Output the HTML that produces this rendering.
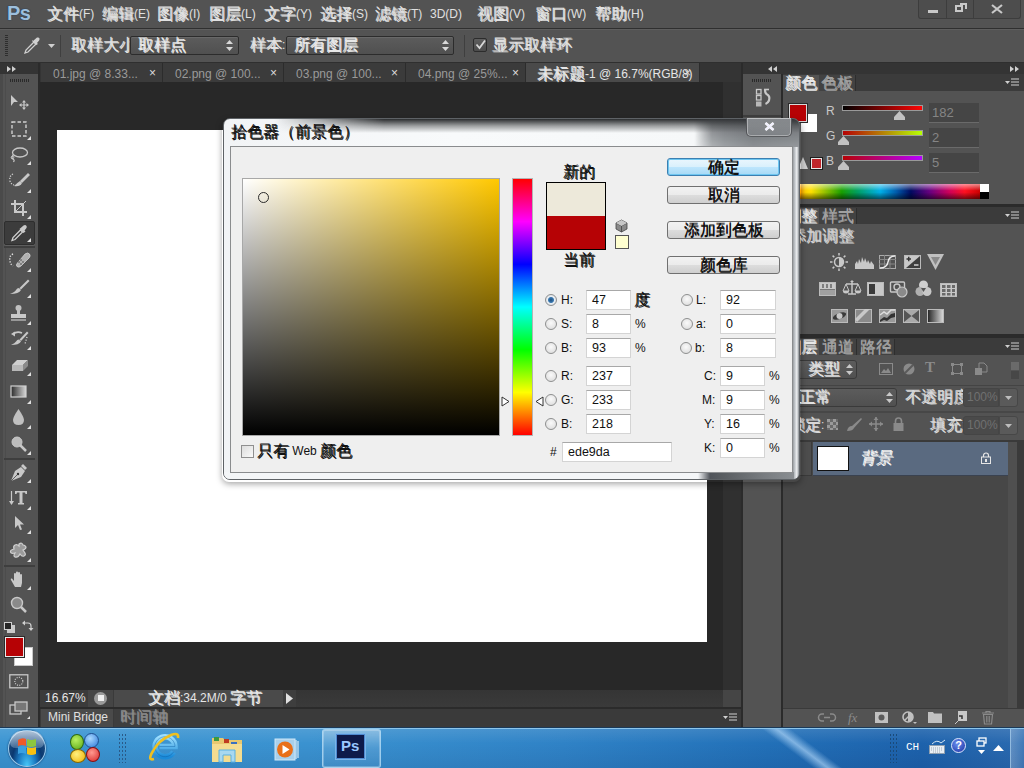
<!DOCTYPE html>
<html><head><meta charset="utf-8">
<style>
*{margin:0;padding:0;box-sizing:border-box}
html,body{width:1024px;height:768px;overflow:hidden;background:#282828;font-family:"Liberation Sans",sans-serif;font-size:12px;color:#ddd}
div,span{position:absolute}
.t{white-space:nowrap}
svg{position:absolute;overflow:visible}
i.c{font-style:normal;font-size:1.3333em;line-height:1px;vertical-align:-1px;text-shadow:0.7px 0.5px 0 currentColor}
.mi{top:6px;font-size:12px;line-height:16px;color:#e0e0e0;white-space:nowrap}
.tab{top:63px;height:19px;background:#3b3b3b;border-right:1px solid #2c2c2c;color:#9a9a9a;font-size:12px;line-height:19px;white-space:nowrap}
.tab span{top:2px;left:12px}
.tab b{position:absolute;top:1px;font-weight:normal;color:#dcdcdc;font-size:12px;line-height:18px}
.ptab{height:16px;font-size:12px;line-height:16px;text-align:center;white-space:nowrap}
.pmenu{width:14px;height:9px}
.vbox{background:#454545;border-bottom:1px solid #6a6a6a;color:#858585;font-size:13px;line-height:19px;padding-left:3px}
.btn{left:667px;width:113px;height:18px;border:1px solid #707070;border-radius:3px;background:linear-gradient(#f2f2f2,#ebebeb 50%,#dddddd 50%,#cfcfcf);color:#111;font-size:12px;line-height:16px;text-align:center}
.inp{background:#fff;border:1px solid #d4d4d4;border-top-color:#a8a8a8;color:#111;font-size:12.5px;line-height:19px;padding-left:5px}
.rad{width:12px;height:12px;border-radius:50%;border:1px solid #8e8f8f;background:radial-gradient(circle at 50% 40%,#fafafa,#d8d8d8)}
.lbl{color:#111;font-size:12px;line-height:14px;white-space:nowrap}
</style></head><body>
<!-- menubar -->
<div style="left:0;top:0;width:1024px;height:28px;background:#535353"></div>
<div class="t" style="left:7px;top:2px;font-size:20px;font-weight:bold;color:#9dbfdc;line-height:22px;letter-spacing:-0.5px;text-shadow:0 0 1px #1e3a5a,0 0 1px #1e3a5a">Ps</div>
<div class="mi" style="left:47px"><i class="c">文件</i>(F)</div>
<div class="mi" style="left:102px"><i class="c">编辑</i>(E)</div>
<div class="mi" style="left:157px"><i class="c">图像</i>(I)</div>
<div class="mi" style="left:209px"><i class="c">图层</i>(L)</div>
<div class="mi" style="left:264px"><i class="c">文字</i>(Y)</div>
<div class="mi" style="left:320px"><i class="c">选择</i>(S)</div>
<div class="mi" style="left:375px"><i class="c">滤镜</i>(T)</div>
<div class="mi" style="left:430px">3D(D)</div>
<div class="mi" style="left:477px"><i class="c">视图</i>(V)</div>
<div class="mi" style="left:535px"><i class="c">窗口</i>(W)</div>
<div class="mi" style="left:595px"><i class="c">帮助</i>(H)</div>
<!-- window buttons -->
<div style="left:918px;top:0;width:103px;height:19px;background:#4d4d4d;border:1px solid #3d3d3d;border-top:none;border-radius:0 0 3px 3px"></div>
<div style="left:946px;top:0;width:1px;height:18px;background:#3d3d3d"></div>
<div style="left:973px;top:0;width:1px;height:18px;background:#3d3d3d"></div>
<div style="left:928px;top:10px;width:10px;height:3px;background:#c8c8c8"></div>
<div style="left:955px;top:5px;width:8px;height:7px;border:2px solid #c8c8c8"></div>
<div style="left:960px;top:3px;width:7px;height:6px;border:2px solid #c8c8c8;border-left:none;border-bottom:none"></div>
<svg style="left:991px;top:4px" width="12" height="10"><path d="M1 1L11 9M11 1L1 9" stroke="#c8c8c8" stroke-width="2.2"/></svg>
<!-- options bar -->
<div style="left:0;top:28px;width:1024px;height:1px;background:#2f2f2f"></div>
<div style="left:0;top:29px;width:1024px;height:33px;background:#535353;border-top:1px solid #5e5e5e"></div>
<div style="left:0;top:62px;width:1024px;height:1px;background:#2f2f2f"></div>
<div style="left:5px;top:35px;width:3px;height:22px;background:repeating-linear-gradient(#2e2e2e 0 1px,transparent 1px 2px)"></div>
<svg style="left:23px;top:36px" width="18" height="19"><path d="M2 17L3 14L11 6L13 8L5 16Z" fill="none" stroke="#d0d0d0" stroke-width="1.3"/><path d="M10 5L14 1.5Q16 1 16.5 2.5Q17 4 14 7L15 8L13 9L9 5L10 4Z" fill="#d0d0d0"/></svg>
<svg style="left:48px;top:44px" width="7" height="4"><path d="M0 0H7L3.5 4Z" fill="#cfcfcf"/></svg>
<div style="left:60px;top:35px;width:1px;height:22px;background:#3f3f3f"></div>
<div class="t" style="left:71px;top:38px;color:#e0e0e0;font-size:12px;line-height:14px"><i class="c">取样大小</i>:</div>
<div style="left:130px;top:36px;width:109px;height:19px;background:linear-gradient(#5c5c5c,#505050);border:1px solid #2c2c2c;border-radius:2px;box-shadow:inset 0 1px 0 #686868"></div>
<div class="t" style="left:138px;top:38px;color:#e8e8e8;font-size:12px;line-height:14px"><i class="c">取样点</i></div>
<svg style="left:226px;top:40px" width="7" height="11"><path d="M0 4L3.5 0L7 4ZM0 7L3.5 11L7 7Z" fill="#d8d8d8"/></svg>
<div class="t" style="left:250px;top:38px;color:#e0e0e0;font-size:12px;line-height:14px"><i class="c">样本</i>:</div>
<div style="left:286px;top:36px;width:168px;height:19px;background:linear-gradient(#5c5c5c,#505050);border:1px solid #2c2c2c;border-radius:2px;box-shadow:inset 0 1px 0 #686868"></div>
<div class="t" style="left:294px;top:38px;color:#e8e8e8;font-size:12px;line-height:14px"><i class="c">所有图层</i></div>
<svg style="left:442px;top:40px" width="7" height="11"><path d="M0 4L3.5 0L7 4ZM0 7L3.5 11L7 7Z" fill="#d8d8d8"/></svg>
<div style="left:464px;top:35px;width:1px;height:22px;background:#3f3f3f"></div>
<div style="left:473px;top:38px;width:14px;height:14px;background:linear-gradient(#5e5e5e,#4c4c4c);border:1px solid #2c2c2c;border-radius:2px"></div>
<svg style="left:475px;top:39px" width="11" height="11"><path d="M1.5 5.5L4.5 9L10 1.5" fill="none" stroke="#d8d8d8" stroke-width="1.8"/></svg>
<div class="t" style="left:492px;top:38px;color:#e0e0e0;font-size:12px;line-height:14px"><i class="c">显示取样环</i></div>
<!-- tool panel -->
<div style="left:0;top:63px;width:39px;height:11px;background:#343434"></div>
<svg style="left:7px;top:66px" width="12" height="6"><path d="M0 0L4 3L0 6ZM5 0L9 3L5 6Z" fill="#cfcfcf"/></svg>
<div style="left:0;top:74px;width:39px;height:653px;background:#535353"></div>
<div style="left:0;top:74px;width:3px;height:653px;background:#4a4a4a"></div>
<div style="left:38px;top:63px;width:2px;height:664px;background:#2b2b2b"></div>
<div style="left:10px;top:79px;width:20px;height:3px;background:repeating-linear-gradient(90deg,#2a2a2a 0 1px,transparent 1px 2px)"></div>
<!-- document area -->
<div style="left:40px;top:63px;width:701px;height:19px;background:#343434"></div>
<div style="left:40px;top:82px;width:683px;height:608px;background:#282828"></div>
<div style="left:723px;top:82px;width:18px;height:608px;background:#303030"></div>
<div style="left:57px;top:130px;width:650px;height:512px;background:#ffffff"></div>
<!-- tabs -->
<div class="tab" style="left:41px;width:122px"><span>01.jpg @ 8.33...</span><b style="left:108px">×</b></div>
<div class="tab" style="left:163px;width:121px"><span>02.png @ 100...</span><b style="left:107px">×</b></div>
<div class="tab" style="left:284px;width:122px"><span>03.png @ 100...</span><b style="left:107px">×</b></div>
<div class="tab" style="left:406px;width:120px"><span>04.png @ 25%...</span><b style="left:106px">×</b></div>
<div class="tab" style="left:526px;width:174px;background:#4a4a4a;color:#e6e6e6"><span style="left:11px"><i class="c">未标题</i>-1 @ 16.7%(RGB/8)</span><b style="left:158px">×</b></div>
<!-- status bar -->
<div style="left:40px;top:690px;width:701px;height:17px;background:linear-gradient(#353535,#3a3a3a)"></div>
<div style="left:40px;top:690px;width:48px;height:17px;background:#3b3b3b"></div>
<div class="t" style="left:45px;top:691px;color:#e6e6e6;font-size:12px;line-height:15px">16.67%</div>
<div style="left:88px;top:690px;width:25px;height:17px;background:#454545"></div>
<div style="left:94px;top:692px;width:13px;height:13px;border-radius:50%;background:#9a9a9a"></div>
<div style="left:98px;top:695px;width:6px;height:6px;background:#eee"></div>
<div style="left:113px;top:690px;width:170px;height:17px;background:#4a4a4a;border-left:1px solid #3a3a3a"></div>
<div class="t" style="left:148px;top:691px;color:#e6e6e6;font-size:12px;line-height:15px"><i class="c">文档</i>:34.2M/0 <i class="c">字节</i></div>
<div style="left:283px;top:690px;width:13px;height:17px;background:#3e3e3e"></div>
<svg style="left:286px;top:693px" width="7" height="11"><path d="M0 0L7 5.5L0 11Z" fill="#e0e0e0"/></svg>
<div style="left:723px;top:690px;width:18px;height:17px;background:#454545"></div>
<!-- bottom strip -->
<div style="left:40px;top:707px;width:701px;height:2px;background:#2b2b2b"></div>
<div style="left:40px;top:709px;width:701px;height:18px;background:#3a3a3a"></div>
<div style="left:41px;top:709px;width:72px;height:18px;background:#4a4a4a;color:#e0e0e0;font-size:12px;line-height:17px;padding-left:7px" class="t">Mini Bridge</div>
<div style="left:114px;top:709px;width:46px;height:18px;background:#3e3e3e;color:#8a8a8a;font-size:12px;line-height:17px;padding-left:6px;border-right:1px solid #2f2f2f" class="t"><i class="c">时间轴</i></div>
<svg style="left:723px;top:713px" width="14" height="9"><path d="M0 3H5L2.5 6Z" fill="#d0d0d0"/><path d="M6 1H14M6 4H14M6 7H14" stroke="#d0d0d0" stroke-width="1"/></svg>
<!-- tool icons -->
<div style="left:5px;top:74px;width:1px;height:653px;background:#4c4c4c"></div>
<svg style="left:10px;top:94px" width="20" height="16"><path d="M1 1L8 8H4L1 12Z" fill="#c8c8c8"/><path d="M14 7V15M10 11H18" stroke="#c8c8c8" stroke-width="1.2"/><path d="M14 6L12 8.5H16ZM14 16L12 13.5H16ZM9 11L11.5 9V13ZM19 11L16.5 9V13Z" fill="#c8c8c8"/></svg>
<svg style="left:11px;top:121px" width="21" height="19"><path d="M1 1H15V15H1Z" fill="none" stroke="#d0d0d0" stroke-width="1.4" stroke-dasharray="3.5 2"/><path d="M20 15V19H16Z" fill="#e0e0e0"/></svg>
<svg style="left:10px;top:146px" width="22" height="20"><ellipse cx="10" cy="6.5" rx="7.5" ry="4.5" fill="none" stroke="#c8c8c8" stroke-width="1.3"/><path d="M3 9Q1 12 3 13Q5 14 3.5 16" fill="none" stroke="#c8c8c8" stroke-width="1.2"/><circle cx="2.5" cy="11.5" r="1.3" fill="none" stroke="#c8c8c8"/><path d="M21 15V19H17Z" fill="#e0e0e0"/></svg>
<svg style="left:8px;top:172px" width="24" height="21"><path d="M5 2Q1 4 2 9Q3 12 6 13" fill="none" stroke="#d0d0d0" stroke-width="1.3" stroke-dasharray="1.2 1.4"/><path d="M20 1L22 3L14 11L12 9Z" fill="#c8c8c8"/><path d="M12 9L14 11Q12 15 6 14Q9 11 12 9Z" fill="#c8c8c8"/><path d="M23 17V21H19Z" fill="#e0e0e0"/></svg>
<svg style="left:8px;top:198px" width="24" height="21"><path d="M7 2V14H19M3 6H15V18" fill="none" stroke="#c8c8c8" stroke-width="2"/><path d="M7 14L18 3" stroke="#c8c8c8" stroke-width="1"/><path d="M23 17V21H19Z" fill="#e0e0e0"/></svg>
<!-- eyedropper active -->
<div style="left:4px;top:221px;width:31px;height:24px;background:#3c3c3c;border:1px solid #2e2e2e;border-radius:2px;box-shadow:0 1px 0 #5e5e5e"></div>
<svg style="left:10px;top:224px" width="22" height="19"><path d="M2 16.5L3 13.5L10.5 6L12.5 8L5 15.5Z" fill="none" stroke="#d0d0d0" stroke-width="1.3"/><path d="M9.5 5L13.5 1.5Q15.5 0.5 16.5 2Q17.5 3.5 14.5 6.5L15.5 7.5L13.5 9L8.5 4Z" fill="#c8c8c8"/><path d="M21 14V18H17Z" fill="#e0e0e0"/></svg>
<div style="left:4px;top:246px;width:31px;height:2px;background:#3e3e3e"></div>
<svg style="left:8px;top:252px" width="24" height="21"><path d="M5 2Q1 4 2 8Q2 12 5 14" fill="none" stroke="#e0e0e0" stroke-width="1.4" stroke-dasharray="1.2 1.6"/><path d="M17 2Q20 0 21.5 2Q23 4 21 6L13 14Q11 16 9 14.5Q7.5 13 9.5 11Z" fill="#b0b0b0" stroke="#d0d0d0" stroke-width="0.8"/><circle cx="13" cy="8" r="0.8" fill="#444"/><circle cx="15" cy="10" r="0.8" fill="#444"/><circle cx="11" cy="10" r="0.8" fill="#444"/><circle cx="13" cy="12" r="0.8" fill="#444"/><path d="M23 16V20H19Z" fill="#e0e0e0"/></svg>
<svg style="left:8px;top:278px" width="24" height="21"><path d="M20 1.5L21.5 3L13 11.5L11.5 10Z" fill="#c8c8c8"/><path d="M11 10L13 12Q11 16 2 16Q7 14 8 12Q9 10 11 10Z" fill="#c8c8c8"/><path d="M23 16V20H19Z" fill="#e0e0e0"/></svg>
<svg style="left:8px;top:304px" width="24" height="21"><circle cx="10.5" cy="4" r="3" fill="#c0c0c0"/><path d="M9 5H12V10H9Z" fill="#c0c0c0"/><path d="M3 10H18V14H3Z" fill="#c8c8c8"/><path d="M3 16H18" stroke="#c8c8c8" stroke-width="1.2"/><path d="M23 17V21H19Z" fill="#e0e0e0"/></svg>
<svg style="left:8px;top:330px" width="24" height="21"><path d="M5 4Q9 1 14 3" fill="none" stroke="#c8c8c8" stroke-width="1.8"/><path d="M3 4L7 1.5V6.5Z" fill="#c8c8c8"/><path d="M19 1.5L20.5 3L13 11L11.5 9.5Z" fill="#c8c8c8"/><path d="M11 9.5L13 11.5Q11 15 3 15Q7 13 8 11.5Q9 9.5 11 9.5Z" fill="#c8c8c8"/><path d="M19 7L17 14" stroke="#e0e0e0" stroke-width="1.3" stroke-dasharray="1 1.8"/><path d="M23 16V20H19Z" fill="#e0e0e0"/></svg>
<svg style="left:8px;top:356px" width="24" height="21"><path d="M4 9L9 4H20L15 9Z" fill="#d0d0d0"/><path d="M4 9H15V15H4Z" fill="#b8b8b8"/><path d="M15 9L20 4V10L15 15Z" fill="#8a8a8a"/><path d="M23 16V20H19Z" fill="#e0e0e0"/></svg>
<svg style="left:8px;top:385px" width="24" height="21"><defs><linearGradient id="tg" x1="0" x2="1"><stop offset="0" stop-color="#2a2a2a"/><stop offset="1" stop-color="#d8d8d8"/></linearGradient></defs><rect x="3" y="1" width="15" height="11" fill="url(#tg)" stroke="#d0d0d0" stroke-width="1.2"/><path d="M23 15V19H19Z" fill="#e0e0e0"/></svg>
<svg style="left:8px;top:409px" width="24" height="21"><path d="M10.5 0Q5 8 5 11Q5 16 10.5 16Q16 16 16 11Q16 8 10.5 0Z" fill="#c0c0c0"/><path d="M23 16V20H19Z" fill="#e0e0e0"/></svg>
<svg style="left:8px;top:436px" width="24" height="21"><circle cx="9" cy="6" r="5" fill="#bcbcbc" stroke="#c8c8c8"/><path d="M12 9L18 15" stroke="#c8c8c8" stroke-width="2.5"/><path d="M23 15V19H19Z" fill="#e0e0e0"/></svg>
<div style="left:4px;top:458px;width:31px;height:2px;background:#3e3e3e"></div>
<svg style="left:8px;top:463px" width="24" height="21"><path d="M15 1L19 5L17 7L13 3Z" fill="#c8c8c8"/><path d="M13 4L17 8L13 14L3 18L7 8Z" fill="#c8c8c8"/><circle cx="10" cy="11" r="1.2" fill="#333"/><path d="M3 18L9.5 11.5" stroke="#444" stroke-width="0.8"/><path d="M23 16V20H19Z" fill="#e0e0e0"/></svg>
<svg style="left:8px;top:490px" width="24" height="21"><path d="M3.5 1V14" stroke="#c8c8c8" stroke-width="1.2"/><path d="M1 11L3.5 15L6 11Z" fill="#c8c8c8"/><path d="M7 1H19V4H17.5L17 2.5H14.5V13H16V14.5H10V13H11.5V2.5H9L8.5 4H7Z" fill="#c8c8c8"/><path d="M23 16V20H19Z" fill="#e0e0e0"/></svg>
<svg style="left:8px;top:515px" width="24" height="21"><path d="M7 1L16 9.5H12L14 14.5L12 15L10 10L7 13Z" fill="#c8c8c8"/><path d="M23 15V19H19Z" fill="#e0e0e0"/></svg>
<svg style="left:8px;top:542px" width="24" height="21"><path d="M11 2Q14 0 15 3Q17 3 18 5Q18 7 15 8L17 11Q18 13 16 14Q14 15 12 12Q10 16 7 15Q5 14 7 11Q3 12 2.5 10Q2 8 6 7Q5 4 7 3Q9 2 11 4Z" fill="#9a9a9a" stroke="#d0d0d0" stroke-width="1.2"/><path d="M23 16V20H19Z" fill="#e0e0e0"/></svg>
<div style="left:4px;top:565px;width:31px;height:2px;background:#3e3e3e"></div>
<svg style="left:8px;top:571px" width="24" height="21"><path d="M7 16L3 9Q2 7 4 7.5L6 10V3Q6 2 7 2Q8 2 8 3V8V1.5Q8 0.5 9 0.5Q10 0.5 10 1.5V8V2Q10 1 11 1Q12 1 12 2V8V4Q12 3 13 3Q14 3 14 4V12L13 16Z" fill="#c8c8c8"/><path d="M23 15V19H19Z" fill="#e0e0e0"/></svg>
<svg style="left:8px;top:596px" width="24" height="21"><circle cx="9" cy="7" r="5.5" fill="#8a8a8a" stroke="#c8c8c8" stroke-width="1.4"/><path d="M13 11L18 16" stroke="#c8c8c8" stroke-width="2.5"/></svg>
<!-- default/swap colors -->
<div style="left:7px;top:625px;width:8px;height:8px;background:#c8c8c8"></div>
<div style="left:4px;top:622px;width:8px;height:8px;background:#262626;border:1px solid #d0d0d0"></div>
<svg style="left:22px;top:620px" width="11" height="11"><path d="M3 3H6Q9 3 9 6V8" fill="none" stroke="#d0d0d0" stroke-width="1.2"/><path d="M0 3L3 0.5V5.5ZM9 11L6.5 8H11.5Z" fill="#d0d0d0"/></svg>
<!-- fg/bg -->
<div style="left:14px;top:647px;width:19px;height:19px;background:#fff;border:1px solid #c8c8c8"></div>
<div style="left:5px;top:637px;width:19px;height:20px;background:#b60205;border:1px solid #e8e8e8;box-shadow:0 0 0 1px #2a2a2a"></div>
<!-- quick mask -->
<svg style="left:9px;top:674px" width="20" height="15"><rect x="0.8" y="0.8" width="18" height="13" fill="none" stroke="#c8c8c8" stroke-width="1.3"/><circle cx="9.8" cy="7.3" r="4" fill="none" stroke="#c8c8c8" stroke-width="1.2" stroke-dasharray="1.1 1.2"/></svg>
<svg style="left:9px;top:701px" width="22" height="19"><rect x="1" y="4" width="11" height="9" fill="none" stroke="#c8c8c8" stroke-width="1.3"/><rect x="6" y="1" width="12" height="9" fill="#777" stroke="#c8c8c8" stroke-width="1.3"/><path d="M21 15V18H18Z" fill="#e0e0e0"/></svg>
<!-- right dock -->
<div style="left:741px;top:63px;width:2px;height:664px;background:#2b2b2b"></div>
<div style="left:743px;top:63px;width:281px;height:11px;background:#343434"></div>
<svg style="left:768px;top:66px" width="10" height="6"><path d="M4 0L0 3L4 6ZM9 0L5 3L9 6Z" fill="#cfcfcf"/></svg>
<svg style="left:1010px;top:66px" width="10" height="6"><path d="M0 0L4 3L0 6ZM5 0L9 3L5 6Z" fill="#cfcfcf"/></svg>
<div style="left:743px;top:74px;width:38px;height:653px;background:#535353"></div>
<div style="left:743px;top:115px;width:38px;height:2px;background:#3e3e3e"></div>
<div style="left:752px;top:79px;width:20px;height:3px;background:repeating-linear-gradient(90deg,#2a2a2a 0 1px,transparent 1px 2px)"></div>
<svg style="left:755px;top:88px" width="18" height="20"><rect x="1.5" y="1.5" width="4.5" height="4.5" fill="none" stroke="#c8c8c8" stroke-width="1.3"/><rect x="1.5" y="7.5" width="4.5" height="4.5" fill="none" stroke="#c8c8c8" stroke-width="1.3"/><rect x="1" y="13.5" width="5.5" height="5" fill="#b8b8b8"/><path d="M9 1.5H14" stroke="#c8c8c8" stroke-width="1.6"/><path d="M10 1.5Q10 5 11.5 6Q15.5 8 14 12.5Q13 15 10.5 16" fill="none" stroke="#c8c8c8" stroke-width="2.2"/></svg>
<div style="left:781px;top:74px;width:2px;height:653px;background:#2b2b2b"></div>

<!-- color panel -->
<div style="left:783px;top:74px;width:241px;height:17px;background:#3b3b3b"></div>
<div class="ptab" style="left:783px;top:75px;width:36px;background:#535353;color:#e8e8e8"><i class="c">颜色</i></div>
<div class="ptab" style="left:819px;top:75px;width:37px;background:#424242;border-right:1px solid #2e2e2e;color:#a0a0a0"><i class="c">色板</i></div>
<svg style="left:1005px;top:78px" width="15" height="9"><path d="M0 3H5L2.5 6Z" fill="#d0d0d0"/><path d="M6 1H14M6 4H14M6 7H14" stroke="#d0d0d0" stroke-width="1"/></svg>
<div style="left:783px;top:91px;width:241px;height:113px;background:#535353"></div>
<!-- fg/bg swatches -->
<div style="left:801px;top:114px;width:16px;height:18px;background:#fff"></div>
<div style="left:788px;top:103px;width:20px;height:20px;background:#b60205;border:1px solid #2a2a2a;box-shadow:inset 0 0 0 1px #d8d8d8"></div>
<div style="left:810px;top:157px;width:13px;height:13px;background:#c0262b;border:1px solid #1e1e1e;box-shadow:inset 0 0 0 1px #e8e8e8"></div>
<svg style="left:798px;top:156px" width="10" height="14"><path d="M0 13L5 1L10 13Z" fill="#cfcfcf"/></svg>
<!-- sliders -->
<div class="t" style="left:826px;top:104px;color:#c8c8c8;font-size:12px;line-height:14px">R</div>
<div class="t" style="left:826px;top:129px;color:#c8c8c8;font-size:12px;line-height:14px">G</div>
<div class="t" style="left:826px;top:154px;color:#c8c8c8;font-size:12px;line-height:14px">B</div>
<div style="left:842px;top:105px;width:81px;height:6px;border:1px solid #9a9a9a;background:linear-gradient(90deg,#000,#ff0505)"></div>
<div style="left:842px;top:130px;width:81px;height:6px;border:1px solid #9a9a9a;background:linear-gradient(90deg,#b60205,#b6ff05)"></div>
<div style="left:842px;top:155px;width:81px;height:6px;border:1px solid #9a9a9a;background:linear-gradient(90deg,#b60205,#b602ff)"></div>
<svg style="left:894px;top:111px" width="11" height="9"><path d="M0 9V6L5.5 0L11 6V9Z" fill="#c2c2c2"/></svg>
<svg style="left:838px;top:136px" width="11" height="9"><path d="M0 9V6L5.5 0L11 6V9Z" fill="#c2c2c2"/></svg>
<svg style="left:838px;top:161px" width="11" height="9"><path d="M0 9V6L5.5 0L11 6V9Z" fill="#c2c2c2"/></svg>
<div class="vbox" style="left:929px;top:103px;width:50px;height:20px">182</div>
<div class="vbox" style="left:929px;top:128px;width:50px;height:20px">2</div>
<div class="vbox" style="left:929px;top:153px;width:50px;height:20px">5</div>
<!-- spectrum -->
<div style="left:788px;top:184px;width:192px;height:15px;background:linear-gradient(90deg,#ff2a00 0%,#ffd200 9%,#ffe000 12%,#18a000 28%,#00a060 36%,#00b0e8 48%,#0060b0 56%,#000a60 64%,#6a0080 74%,#d0005a 84%,#ff1020 92%,#cc0000 100%);"></div>
<div style="left:788px;top:184px;width:192px;height:15px;background:linear-gradient(#ffffff 0%,rgba(255,255,255,0) 45%,rgba(0,0,0,0) 55%,#000 100%);opacity:.55"></div>
<div style="left:980px;top:184px;width:9px;height:8px;background:#fff"></div>
<div style="left:980px;top:192px;width:9px;height:7px;background:#000"></div>

<!-- gap -->
<div style="left:783px;top:204px;width:241px;height:3px;background:#2b2b2b"></div>
<!-- adjustments panel -->
<div style="left:783px;top:207px;width:241px;height:17px;background:#3b3b3b"></div>
<div class="ptab" style="left:783px;top:208px;width:36px;background:#535353;color:#e8e8e8"><i class="c">调整</i></div>
<div class="ptab" style="left:819px;top:208px;width:38px;background:#424242;border-right:1px solid #2e2e2e;color:#a0a0a0"><i class="c">样式</i></div>
<svg style="left:1005px;top:211px" width="15" height="9"><path d="M0 3H5L2.5 6Z" fill="#d0d0d0"/><path d="M6 1H14M6 4H14M6 7H14" stroke="#d0d0d0" stroke-width="1"/></svg>
<div style="left:783px;top:224px;width:241px;height:110px;background:#535353"></div>
<div class="t" style="left:790px;top:229px;color:#d0d0d0;font-size:12px;line-height:15px"><i class="c">添加调整</i></div>
<!-- adjustment icons row1 -->
<svg style="left:830px;top:253px" width="18" height="18"><circle cx="9" cy="9" r="4.5" fill="none" stroke="#c8c8c8" stroke-width="1.5"/><path d="M9 4.5A4.5 4.5 0 0 1 9 13.5Z" fill="#c8c8c8"/><path d="M9 0V2.5M9 15.5V18M0 9H2.5M15.5 9H18M2.6 2.6L4.3 4.3M13.7 13.7L15.4 15.4M2.6 15.4L4.3 13.7M13.7 4.3L15.4 2.6" stroke="#c8c8c8" stroke-width="1.5"/></svg>
<svg style="left:855px;top:255px" width="19" height="14"><path d="M0 14V9L2 6L3 9L4 4L6 8L7 2L9 7L10 3L12 8L13 5L15 9L16 6L19 10V14Z" fill="#c8c8c8"/></svg>
<svg style="left:879px;top:255px" width="17" height="14"><rect x="0.5" y="0.5" width="16" height="13" fill="none" stroke="#aaa"/><path d="M5.5 0V14M11 0V14M0 4.5H17M0 9H17" stroke="#888" stroke-width="1"/><path d="M1 13Q8 13 9 7Q10 1 16 1" fill="none" stroke="#eee" stroke-width="1.5"/></svg>
<svg style="left:904px;top:255px" width="17" height="14"><rect x="0.5" y="0.5" width="16" height="13" fill="#c8c8c8" stroke="#bbb"/><path d="M16 1V13H2Z" fill="#3e3e3e"/><path d="M2.5 4H7M4.75 1.8V6.2" stroke="#333" stroke-width="1.4"/><path d="M10 10H14.5" stroke="#ddd" stroke-width="1.4"/></svg>
<svg style="left:927px;top:254px" width="17" height="16"><path d="M0 0H17L8.5 16Z" fill="#c0c0c0"/><path d="M4 3H13L8.5 11Z" fill="#8a8a8a"/></svg>
<!-- row2 -->
<svg style="left:819px;top:282px" width="17" height="14"><rect x="0.5" y="0.5" width="16" height="13" fill="#777" stroke="#bbb"/><path d="M1 1H16V7H1Z" fill="#c8c8c8"/><path d="M4 2V6M8 2V6M12 2V6" stroke="#666" stroke-width="1.5"/><path d="M1 8H16V13H1Z" fill="#a0a0a0"/></svg>
<svg style="left:843px;top:280px" width="18" height="17"><path d="M9 1V14M3 4H15M5 14H13" stroke="#c8c8c8" stroke-width="1.5"/><path d="M7 2L9 0L11 2Z" fill="#c8c8c8"/><path d="M3 4L0 11H6Z M15 4L12 11H18Z" fill="none" stroke="#c8c8c8" stroke-width="1"/><path d="M0 11A3 2.5 0 0 0 6 11Z M12 11A3 2.5 0 0 0 18 11Z" fill="#c8c8c8"/></svg>
<svg style="left:867px;top:282px" width="17" height="14"><rect x="0.5" y="0.5" width="16" height="13" fill="#c8c8c8" stroke="#bbb"/><path d="M2 2H8V12H2Z" fill="#3a3a3a"/></svg>
<svg style="left:890px;top:279px" width="19" height="19"><rect x="0.5" y="3" width="14" height="10" rx="1" fill="none" stroke="#c8c8c8" stroke-width="1.4"/><circle cx="7" cy="8" r="3" fill="none" stroke="#c8c8c8" stroke-width="1.4"/><circle cx="12" cy="13" r="5" fill="#8a8a8a" stroke="#c8c8c8" stroke-width="1.2"/></svg>
<svg style="left:915px;top:280px" width="17" height="17"><circle cx="8.5" cy="5" r="4.5" fill="#d0d0d0"/><circle cx="5" cy="11.5" r="4.5" fill="#b0b0b0"/><circle cx="12" cy="11.5" r="4.5" fill="#c8c8c8"/><path d="M6 8H11L8.5 12Z" fill="#555"/></svg>
<svg style="left:940px;top:283px" width="17" height="14"><rect x="0.5" y="0.5" width="16" height="13" fill="#c8c8c8" stroke="#bbb"/><path d="M2 2H5.5V5H2ZM7 2H10.5V5H7ZM12 2H15V5H12ZM2 6H5.5V9H2ZM7 6H10.5V9H7ZM12 6H15V9H12ZM2 10H5.5V12.5H2ZM7 10H10.5V12.5H7ZM12 10H15V12.5H12Z" fill="#6a6a6a"/></svg>
<!-- row3 -->
<svg style="left:831px;top:309px" width="17" height="14"><rect x="0.5" y="0.5" width="16" height="13" fill="#9a9a9a" stroke="#bbb"/><ellipse cx="8.5" cy="7" rx="7" ry="3" transform="rotate(-20 8.5 7)" fill="#3a3a3a"/><circle cx="8.5" cy="7" r="3" fill="#c8c8c8"/></svg>
<svg style="left:855px;top:309px" width="17" height="14"><rect x="0.5" y="0.5" width="16" height="13" fill="#8a8a8a" stroke="#bbb"/><path d="M0 10L10 0H15L2 13Z" fill="#c8c8c8"/></svg>
<svg style="left:879px;top:309px" width="17" height="14"><rect x="0.5" y="0.5" width="16" height="13" fill="#9a9a9a" stroke="#bbb"/><path d="M1 11L5 8L8 9L12 5L16 4V8L12 9L8 12L5 11L1 13Z" fill="#333"/><path d="M1 6L5 3L8 5L12 1L16 1" stroke="#ddd" stroke-width="1.5" fill="none"/></svg>
<svg style="left:903px;top:309px" width="17" height="14"><rect x="0.5" y="0.5" width="16" height="13" fill="#aaa" stroke="#bbb"/><path d="M1 1L8.5 7L1 13ZM16 1L8.5 7L16 13Z" fill="#555"/></svg>
<svg style="left:927px;top:309px" width="17" height="14"><defs><linearGradient id="gm" x1="0" x2="1"><stop offset="0" stop-color="#222"/><stop offset="1" stop-color="#ddd"/></linearGradient></defs><rect x="0.5" y="0.5" width="16" height="13" fill="url(#gm)" stroke="#bbb"/></svg>

<!-- gap -->
<div style="left:783px;top:334px;width:241px;height:4px;background:#2b2b2b"></div>
<!-- layers panel -->
<div style="left:783px;top:338px;width:241px;height:17px;background:#3b3b3b"></div>
<div class="ptab" style="left:783px;top:339px;width:36px;background:#535353;color:#e8e8e8"><i class="c">图层</i></div>
<div class="ptab" style="left:819px;top:339px;width:38px;background:#424242;border-right:1px solid #2e2e2e;color:#a0a0a0"><i class="c">通道</i></div>
<div class="ptab" style="left:857px;top:339px;width:38px;background:#424242;border-right:1px solid #2e2e2e;color:#a0a0a0"><i class="c">路径</i></div>
<svg style="left:1005px;top:342px" width="15" height="9"><path d="M0 3H5L2.5 6Z" fill="#d0d0d0"/><path d="M6 1H14M6 4H14M6 7H14" stroke="#d0d0d0" stroke-width="1"/></svg>
<div style="left:783px;top:355px;width:241px;height:87px;background:#535353"></div>
<!-- filter row -->
<div style="left:778px;top:360px;width:79px;height:19px;background:linear-gradient(#5c5c5c,#505050);border:1px solid #3a3a3a;border-radius:3px"></div>
<div class="t" style="left:808px;top:362px;color:#e0e0e0;font-size:12px;line-height:14px"><i class="c">类型</i></div>
<div style="left:785px;top:364px;width:9px;height:9px;border-radius:50%;border:2px solid #9a9a9a"></div>
<svg style="left:846px;top:364px" width="7" height="11"><path d="M0 4L3.5 0L7 4ZM0 7L3.5 11L7 7Z" fill="#c8c8c8"/></svg>
<svg style="left:879px;top:363px" width="14" height="12"><rect x="0.5" y="0.5" width="13" height="11" fill="none" stroke="#8a8a8a"/><path d="M2 10L5 6L7 8L9 5L12 10Z" fill="#8a8a8a"/></svg>
<svg style="left:903px;top:363px" width="12" height="12"><circle cx="6" cy="6" r="5.5" fill="#8a8a8a"/><path d="M2 10L10 2" stroke="#5a5a5a" stroke-width="2"/></svg>
<div class="t" style="left:925px;top:359px;color:#8a8a8a;font-size:15px;font-family:'Liberation Serif',serif;font-weight:bold;line-height:16px">T</div>
<svg style="left:951px;top:363px" width="12" height="12"><rect x="1.5" y="1.5" width="9" height="9" fill="none" stroke="#8a8a8a"/><rect x="0" y="0" width="3" height="3" fill="#8a8a8a"/><rect x="9" y="0" width="3" height="3" fill="#8a8a8a"/><rect x="0" y="9" width="3" height="3" fill="#8a8a8a"/><rect x="9" y="9" width="3" height="3" fill="#8a8a8a"/></svg>
<svg style="left:975px;top:363px" width="12" height="12"><path d="M4 0H9L12 3V9H4Z" fill="none" stroke="#8a8a8a"/><rect x="0" y="5" width="7" height="7" fill="#8a8a8a"/></svg>
<div style="left:1011px;top:362px;width:8px;height:8px;background:#6a6a6a"></div>
<div style="left:1011px;top:371px;width:8px;height:8px;background:#474747"></div>
<!-- blend row -->
<div style="left:782px;top:386px;width:1px;height:1px;background:#3a3a3a"></div>
<div style="left:783px;top:385px;width:241px;height:1px;background:#444"></div>
<div style="left:778px;top:388px;width:119px;height:19px;background:linear-gradient(#5c5c5c,#505050);border:1px solid #3a3a3a;border-radius:3px"></div>
<div class="t" style="left:799px;top:390px;color:#e0e0e0;font-size:12px;line-height:14px"><i class="c">正常</i></div>
<svg style="left:886px;top:392px" width="7" height="11"><path d="M0 4L3.5 0L7 4ZM0 7L3.5 11L7 7Z" fill="#c8c8c8"/></svg>
<div class="t" style="left:905px;top:390px;color:#d8d8d8;font-size:12px;line-height:14px"><i class="c">不透明度</i>:</div>
<div style="left:963px;top:388px;width:36px;height:19px;background:#4a4a4a;border:1px solid #454545;border-radius:3px 0 0 3px;color:#707070;font-size:12px;line-height:17px;padding-left:3px" class="t">100%</div>
<div style="left:999px;top:388px;width:19px;height:19px;background:#5a5a5a;border:1px solid #474747;border-radius:0 3px 3px 0"></div>
<svg style="left:1005px;top:396px" width="7" height="4"><path d="M0 0H7L3.5 4Z" fill="#bdbdbd"/></svg>
<div style="left:783px;top:411px;width:241px;height:2px;background:#474747"></div>
<div class="t" style="left:789px;top:418px;color:#d8d8d8;font-size:12px;line-height:14px"><i class="c">锁定</i>:</div>
<svg style="left:827px;top:419px" width="11" height="11"><rect x="0" y="0" width="11" height="11" fill="#6a6a6a"/><path d="M0 0H3V3H0ZM6 0H9V3H6ZM3 3H6V6H3ZM9 3H11V6H9ZM0 6H3V9H0ZM6 6H9V9H6ZM3 9H6V11H3ZM9 9H11V11H9Z" fill="#9a9a9a"/></svg>
<svg style="left:846px;top:417px" width="16" height="15"><path d="M1 14Q2 9 6 9L15 1L16 2L8 11Q7 14 1 14Z" fill="#8a8a8a"/></svg>
<svg style="left:869px;top:417px" width="14" height="14"><path d="M7 0V14M0 7H14" stroke="#8a8a8a" stroke-width="1.5"/><path d="M7 0L4.5 3H9.5ZM7 14L4.5 11H9.5ZM0 7L3 4.5V9.5ZM14 7L11 4.5V9.5Z" fill="#8a8a8a"/></svg>
<svg style="left:893px;top:417px" width="11" height="14"><path d="M2.5 6V4A3 3 0 0 1 8.5 4V6" fill="none" stroke="#8a8a8a" stroke-width="1.6"/><rect x="0.5" y="6" width="10" height="8" fill="#8a8a8a"/></svg>
<div class="t" style="left:930px;top:418px;color:#d8d8d8;font-size:12px;line-height:14px"><i class="c">填充</i>:</div>
<div style="left:963px;top:416px;width:36px;height:19px;background:#4a4a4a;border:1px solid #454545;border-radius:3px 0 0 3px;color:#707070;font-size:12px;line-height:17px;padding-left:3px" class="t">100%</div>
<div style="left:999px;top:416px;width:19px;height:19px;background:#5a5a5a;border:1px solid #474747;border-radius:0 3px 3px 0"></div>
<svg style="left:1005px;top:424px" width="7" height="4"><path d="M0 0H7L3.5 4Z" fill="#bdbdbd"/></svg>
<div style="left:783px;top:440px;width:241px;height:2px;background:#3a3a3a"></div>
<!-- layer list -->
<div style="left:783px;top:442px;width:241px;height:266px;background:#474747"></div>
<div style="left:783px;top:442px;width:29px;height:34px;background:#4d4d4d;border-right:1px solid #3a3a3a;border-bottom:1px solid #3a3a3a"></div>
<div style="left:813px;top:442px;width:195px;height:34px;background:#5a6a80;border-bottom:1px solid #3a4250"></div>
<div style="left:817px;top:446px;width:32px;height:25px;background:#fff;border:1px solid #111"></div>
<div class="t" style="left:861px;top:451px;color:#f0f0f0;font-size:12px;line-height:14px;transform:skewX(-12deg)"><i class="c">背景</i></div>
<svg style="left:981px;top:452px" width="10" height="12"><path d="M2.5 5V3.5A2.5 2.5 0 0 1 7.5 3.5V5" fill="none" stroke="#e6e6e6" stroke-width="1.2"/><rect x="0.5" y="5" width="9" height="6.5" fill="none" stroke="#e6e6e6" stroke-width="1"/><rect x="4" y="7" width="2" height="3" fill="#e6e6e6"/></svg>
<div style="left:1008px;top:442px;width:9px;height:266px;background:#4f4f4f"></div>
<div style="left:1017px;top:442px;width:7px;height:266px;background:#3a3a3a"></div>
<!-- layer bottom bar -->
<div style="left:783px;top:708px;width:241px;height:19px;background:#535353;border-top:1px solid #3a3a3a"></div>
<svg style="left:819px;top:713px" width="16" height="9"><path d="M5 1H3A3.5 3.5 0 0 0 3 8H5M11 1H13A3.5 3.5 0 0 1 13 8H11M5 4.5H11" fill="none" stroke="#8a8a8a" stroke-width="1.5"/></svg>
<div class="t" style="left:848px;top:710px;color:#8a8a8a;font-size:13px;font-style:italic;font-family:'Liberation Serif',serif;line-height:15px">fx</div>
<svg style="left:875px;top:712px" width="13" height="11"><rect x="0" y="0" width="13" height="11" fill="#c0c0c0"/><circle cx="6.5" cy="5.5" r="3" fill="#5a5a5a"/></svg>
<svg style="left:902px;top:711px" width="15" height="14"><circle cx="6" cy="6" r="5" fill="none" stroke="#c0c0c0" stroke-width="1.6"/><path d="M2.5 9.5L9.5 2.5" stroke="#c0c0c0" stroke-width="1.5"/><path d="M6 1A5 5 0 0 1 6 11" fill="#c0c0c0"/><path d="M11 11H15L13 13Z" fill="#c0c0c0"/></svg>
<svg style="left:928px;top:711px" width="14" height="12"><path d="M0 1H5L6 2.5H14V12H0Z" fill="#c0c0c0"/></svg>
<svg style="left:955px;top:711px" width="13" height="13"><path d="M3 0H12V10H3Z" fill="#c8c8c8"/><path d="M0 13L5 8" stroke="#c8c8c8" stroke-width="1"/><path d="M4 5H7V8" fill="none" stroke="#333" stroke-width="1.5"/></svg>
<svg style="left:982px;top:711px" width="12" height="13"><path d="M0 2H12M4 2V0.5H8V2" fill="none" stroke="#8a8a8a" stroke-width="1.2"/><path d="M1.5 3.5H10.5L9.5 13H2.5Z" fill="none" stroke="#8a8a8a" stroke-width="1.2"/><path d="M4.5 5V11.5M6 5V11.5M7.5 5V11.5" stroke="#8a8a8a" stroke-width="0.8"/></svg>
<!-- dialog -->
<div style="left:222px;top:119px;width:579px;height:363px;border-radius:7px;box-shadow:0 2px 6px rgba(0,0,0,.35)"></div>
<div style="left:223px;top:118px;width:577px;height:362px;border:1px solid #5e6266;border-radius:7px;background:linear-gradient(90deg,#f2f4f6 0%,#f8fafb 40%,#f6f8f9 82%,#b8bcc0 87%,#9a9ea2 92%,#a8acb0 100%);overflow:hidden">
  <div style="left:0;top:0;width:577px;height:14px;background:linear-gradient(rgba(25,27,29,.92),rgba(70,72,74,.5) 50%,rgba(255,255,255,0));-webkit-mask-image:linear-gradient(90deg,transparent 0,transparent 50px,#000 160px,#000 100%)"></div>
  <div style="left:470px;top:0;width:107px;height:28px;background:linear-gradient(rgba(60,62,65,.6),rgba(120,124,128,.4));-webkit-mask-image:linear-gradient(90deg,transparent 0,#000 18px)"></div>
  <div style="left:569px;top:28px;width:7px;height:333px;background:linear-gradient(90deg,#9a9ea2,#c8ccd0 30%,#eef0f2 55%,#8a8e92 85%,#6a6e72)"></div>
  <div style="left:0;top:353px;width:570px;height:8px;background:linear-gradient(90deg,#f4f6f8 0px,#f4f6f8 474px,#50545a 486px,#5a5e62 500px,#787c80 540px,#8a8e92 570px)"></div>
</div>
<div class="t" style="left:231px;top:125px;color:#111;font-size:12px;line-height:14px"><i class="c">拾色器（前景色）</i></div>
<!-- close button -->
<div style="left:746px;top:118px;width:46px;height:19px;border:1px solid rgba(70,72,76,.8);border-top:none;border-radius:0 0 5px 5px;background:linear-gradient(rgba(210,214,218,.55),rgba(120,124,128,.45));box-shadow:inset 0 0 0 1px rgba(255,255,255,.35)"></div>
<svg style="left:764px;top:122px" width="11" height="9"><path d="M1.5 1L9.5 8M9.5 1L1.5 8" stroke="#fff" stroke-width="2.6"/><path d="M1.5 1L9.5 8M9.5 1L1.5 8" stroke="#eef" stroke-width="1.4"/></svg>
<!-- client area -->
<div style="left:230px;top:146px;width:563px;height:327px;background:#efefef;border:1px solid #8a8c8e"></div>
<!-- color field -->
<div style="left:242px;top:178px;width:258px;height:258px;background:#a8a8a8"></div>
<div style="left:243px;top:179px;width:256px;height:256px;background:linear-gradient(90deg,#fff,#ffc800)"></div>
<div style="left:243px;top:179px;width:256px;height:256px;background:linear-gradient(rgba(0,0,0,0),#000)"></div>
<div style="left:258px;top:192px;width:11px;height:11px;border-radius:50%;border:1px solid #2a2a2a"></div>
<!-- hue slider -->
<div style="left:512px;top:178px;width:21px;height:258px;background:#b4b4b4"></div>
<div style="left:513px;top:179px;width:19px;height:256px;background:linear-gradient(#ff0000 0%,#ff00ff 16.67%,#0000ff 33.33%,#00ffff 50%,#00ff00 66.67%,#ffff00 83.33%,#ff0000 100%)"></div>
<svg style="left:501px;top:396px" width="9" height="11"><path d="M1 1L8 5.5L1 10Z" fill="#fff" stroke="#333" stroke-width="1"/></svg>
<svg style="left:535px;top:396px" width="9" height="11"><path d="M8 1L1 5.5L8 10Z" fill="#fff" stroke="#333" stroke-width="1"/></svg>
<!-- new/current -->
<div class="lbl" style="left:563px;top:165px"><i class="c">新的</i></div>
<div style="left:546px;top:182px;width:60px;height:68px;border:1px solid #000;background:linear-gradient(#ede9da 50%,#b60205 50%)"></div>
<div class="lbl" style="left:563px;top:253px"><i class="c">当前</i></div>
<svg style="left:615px;top:219px" width="13" height="14"><path d="M6.5 1L12 4V10L6.5 13L1 10V4Z" fill="#8a8a8a" stroke="#444" stroke-width="0.8"/><path d="M1 4L6.5 7L12 4" fill="none" stroke="#444" stroke-width="0.8"/><path d="M6.5 1L12 4L6.5 7L1 4Z" fill="#c8c8c8"/><path d="M6.5 7V13" stroke="#444" stroke-width="0.8"/></svg>
<div style="left:615px;top:235px;width:14px;height:14px;border:1px solid #555;background:#ffffd0"></div>
<!-- buttons -->
<div class="btn" style="top:158px;border-color:#3c7fb1;background:linear-gradient(#eaf6fd,#d9f0fc 50%,#bee6fd 50%,#a7d9f5);box-shadow:inset 0 0 0 1px #6ec6f0"><i class="c">确定</i></div>
<div class="btn" style="top:186px"><i class="c">取消</i></div>
<div class="btn" style="top:221px"><i class="c">添加到色板</i></div>
<div class="btn" style="top:256px"><i class="c">颜色库</i></div>
<!-- HSB RGB -->
<div class="rad" style="left:545px;top:294px;background:radial-gradient(circle,#1e4f7e 0,#3a78b0 2.5px,#e9eef2 3.5px,#d0d6dc 100%)"></div>
<div class="rad" style="left:545px;top:318px"></div>
<div class="rad" style="left:545px;top:342px"></div>
<div class="rad" style="left:545px;top:370px"></div>
<div class="rad" style="left:545px;top:394px"></div>
<div class="rad" style="left:545px;top:418px"></div>
<div class="lbl" style="left:561px;top:293px">H:</div>
<div class="lbl" style="left:561px;top:317px">S:</div>
<div class="lbl" style="left:561px;top:341px">B:</div>
<div class="lbl" style="left:561px;top:369px">R:</div>
<div class="lbl" style="left:561px;top:393px">G:</div>
<div class="lbl" style="left:561px;top:417px">B:</div>
<div class="inp" style="left:586px;top:290px;width:45px;height:20px">47</div>
<div class="inp" style="left:586px;top:314px;width:45px;height:20px">8</div>
<div class="inp" style="left:586px;top:338px;width:45px;height:20px">93</div>
<div class="inp" style="left:586px;top:366px;width:45px;height:20px">237</div>
<div class="inp" style="left:586px;top:390px;width:45px;height:20px">233</div>
<div class="inp" style="left:586px;top:414px;width:45px;height:20px">218</div>
<div class="lbl" style="left:634px;top:293px"><i class="c">度</i></div>
<div class="lbl" style="left:635px;top:317px">%</div>
<div class="lbl" style="left:635px;top:341px">%</div>
<!-- Lab -->
<div class="rad" style="left:681px;top:294px"></div>
<div class="rad" style="left:681px;top:318px"></div>
<div class="rad" style="left:680px;top:342px"></div>
<div class="lbl" style="left:696px;top:293px">L:</div>
<div class="lbl" style="left:696px;top:317px">a:</div>
<div class="lbl" style="left:695px;top:341px">b:</div>
<div class="inp" style="left:720px;top:290px;width:56px;height:20px">92</div>
<div class="inp" style="left:720px;top:314px;width:56px;height:20px">0</div>
<div class="inp" style="left:720px;top:338px;width:56px;height:20px">8</div>
<!-- CMYK -->
<div class="lbl" style="left:704px;top:369px">C:</div>
<div class="lbl" style="left:702px;top:393px">M:</div>
<div class="lbl" style="left:704px;top:417px">Y:</div>
<div class="lbl" style="left:704px;top:441px">K:</div>
<div class="inp" style="left:720px;top:366px;width:45px;height:20px">9</div>
<div class="inp" style="left:720px;top:390px;width:45px;height:20px">9</div>
<div class="inp" style="left:720px;top:414px;width:45px;height:20px">16</div>
<div class="inp" style="left:720px;top:438px;width:45px;height:20px">0</div>
<div class="lbl" style="left:769px;top:369px">%</div>
<div class="lbl" style="left:769px;top:393px">%</div>
<div class="lbl" style="left:769px;top:417px">%</div>
<div class="lbl" style="left:769px;top:441px">%</div>
<!-- hex -->
<div class="lbl" style="left:550px;top:445px">#</div>
<div class="inp" style="left:562px;top:442px;width:110px;height:20px">ede9da</div>
<!-- web only -->
<div style="left:241px;top:445px;width:13px;height:13px;border:1px solid #8f8f8f;background:linear-gradient(135deg,#dcdcdc,#fafafa)"></div>
<div class="lbl" style="left:257px;top:444px"><i class="c">只有</i> Web <i class="c">颜色</i></div>
<!-- taskbar -->
<div style="left:0;top:727px;width:1024px;height:41px;background:linear-gradient(90deg,#3b95d2 0%,#3a92d0 30%,#2f82c6 55%,#2270b8 75%,#1d62ac 90%,#2a6ab0 100%)"></div>
<div style="left:0;top:727px;width:1024px;height:41px;background:linear-gradient(rgba(255,255,255,.12),rgba(255,255,255,0) 40%,rgba(0,0,40,.08))"></div>
<div style="left:0;top:727px;width:1024px;height:1px;background:#1a3a5a"></div>
<div style="left:0;top:728px;width:1024px;height:1px;background:#8cc4ea"></div>
<div style="left:752px;top:729px;width:110px;height:39px;background:linear-gradient(37deg,rgba(255,255,255,0) 38%,rgba(190,225,255,.6) 47%,rgba(255,255,255,0) 56%)"></div>
<!-- start orb -->
<div style="left:8px;top:730px;width:38px;height:37px;border-radius:50%;background:radial-gradient(ellipse at 50% 100%,#48c8f8 0,#1a78c0 35%,#0a3870 60%,#2a5a88 100%);border:1px solid #9cc8e8;box-shadow:0 0 2px #0a3060"></div>
<div style="left:10px;top:731px;width:34px;height:17px;border-radius:17px 17px 8px 8px;background:linear-gradient(rgba(230,240,250,.75),rgba(160,190,215,.35))"></div>
<svg style="left:16px;top:736px" width="22" height="22"><path d="M2 4Q6 1 10 3V10Q6 8 2 10Z" fill="#f05a28"/><path d="M11 3Q15 5 20 3V10Q15 12 11 10Z" fill="#8cc63f"/><path d="M2 11Q6 9 10 11V18Q6 16 2 18Z" fill="#3aa0e0"/><path d="M11 11Q15 13 20 11V18Q15 20 11 18Z" fill="#f8c010"/></svg>
<!-- colorful app icon -->
<div style="left:70px;top:734px;width:14px;height:16px;border-radius:50%;background:radial-gradient(circle at 40% 35%,#b8f060,#5aa818);border:1px solid #2e6a10"></div>
<div style="left:84px;top:733px;width:15px;height:15px;border-radius:50%;background:radial-gradient(circle at 40% 35%,#a8d8ff,#2a78d8);border:1px solid #1e4e90"></div>
<div style="left:70px;top:749px;width:16px;height:14px;border-radius:50%;background:radial-gradient(circle at 40% 35%,#fff080,#f0b000);border:1px solid #8a6a00"></div>
<div style="left:86px;top:747px;width:14px;height:15px;border-radius:50%;background:radial-gradient(circle at 40% 35%,#ff9a90,#d82828);border:1px solid #8a1010"></div>
<!-- grip -->
<div style="left:118px;top:733px;width:9px;height:30px;background-image:radial-gradient(circle,#2a5a88 0.9px,transparent 1.1px);background-size:3px 4px"></div>
<!-- IE -->
<svg style="left:149px;top:731px" width="32" height="32"><defs><linearGradient id="ieg" x1="0" y1="0" x2="0" y2="1"><stop offset="0" stop-color="#9ee0ff"/><stop offset="1" stop-color="#1a8ad8"/></linearGradient></defs><path d="M24.5 21A10 10 0 1 1 26 15.5H10.5" fill="none" stroke="url(#ieg)" stroke-width="5.5"/><path d="M24.5 21A10 10 0 1 1 26 15.5H10.5" fill="none" stroke="#0a5aa0" stroke-width="0.8" opacity=".5"/><path d="M5 28Q-2 30 4 20Q10 9 22 4Q30 1 29 7" fill="none" stroke="#f0c020" stroke-width="2.6"/></svg>
<!-- explorer -->
<svg style="left:211px;top:735px" width="32" height="29"><path d="M1 3H12L14 5H31V27H1Z" fill="#e8c870"/><path d="M3 2H8V6H3Z" fill="#3a9a40"/><path d="M13 4H18V8H13Z" fill="#c03a20"/><path d="M20 7H26V11H20Z" fill="#3a70c0"/><path d="M1 9H31V27H1Z" fill="#f4dc90"/><path d="M8 15H24V27H20V20H12V27H8Z" fill="#a8d8f0" stroke="#5ab0e0" stroke-width="1"/></svg>
<!-- media player -->
<svg style="left:275px;top:738px" width="26" height="23"><rect x="0" y="1" width="20" height="21" fill="#a8d0ec" stroke="#d0e8f8"/><path d="M21 2V21M23 3V20" stroke="#d8ecf8" stroke-width="1.2"/><circle cx="10" cy="11.5" r="8" fill="#e8701a"/><path d="M7.5 7V16L14.5 11.5Z" fill="#fff"/></svg>
<!-- PS active button -->
<div style="left:322px;top:729px;width:59px;height:39px;border:1px solid rgba(180,220,245,.8);border-radius:3px;background:linear-gradient(rgba(255,255,255,.35),rgba(255,255,255,.12) 50%,rgba(255,255,255,.05));box-shadow:inset 0 0 0 1px rgba(255,255,255,.25)"></div>
<div style="left:336px;top:734px;width:29px;height:25px;background:#0d1a4a;border:1px solid #4e8ad0;box-shadow:0 0 0 1px #7ab4e8"></div>
<div class="t" style="left:341px;top:737px;color:#9ac8ff;font-size:15px;font-weight:bold;line-height:18px">Ps</div>
<!-- tray -->
<div style="left:889px;top:733px;width:9px;height:30px;background-image:radial-gradient(circle,#1a4a7a 0.9px,transparent 1.1px);background-size:3px 4px"></div>
<div class="t" style="left:906px;top:740px;color:#fff;font-size:11px;line-height:14px;font-family:'Liberation Mono',monospace">CH</div>
<svg style="left:929px;top:739px" width="17" height="15"><path d="M3 5Q8 0 12 4L16 1" fill="none" stroke="#d8e8f4" stroke-width="1"/><rect x="0.5" y="6.5" width="15" height="8" fill="#e8eef4" stroke="#90a0b0"/><path d="M2 9H14M2 11H14M4 13H12" stroke="#8898a8" stroke-width="0.8" stroke-dasharray="1 1"/></svg>
<div style="left:951px;top:738px;width:15px;height:15px;border-radius:50%;background:radial-gradient(circle at 40% 35%,#6a8ef0,#1a30a0);border:1px solid #e0e8ff;color:#fff;font-size:11px;font-weight:bold;line-height:13px;text-align:center">?</div>
<svg style="left:976px;top:737px" width="11" height="19"><rect x="3" y="1" width="7" height="5" fill="none" stroke="#fff" stroke-width="1.3"/><rect x="1" y="4" width="7" height="5" fill="#2a6ab0" stroke="#fff" stroke-width="1.3"/><path d="M2 13H9L5.5 17Z" fill="#fff"/></svg>
<svg style="left:993px;top:745px" width="11" height="6"><path d="M0 6L5.5 0L11 6Z" fill="#fff"/></svg>
<div style="left:1010px;top:729px;width:14px;height:39px;background:linear-gradient(90deg,rgba(255,255,255,.25),rgba(255,255,255,.1));border-left:1px solid rgba(200,230,250,.6)"></div>
</body></html>
